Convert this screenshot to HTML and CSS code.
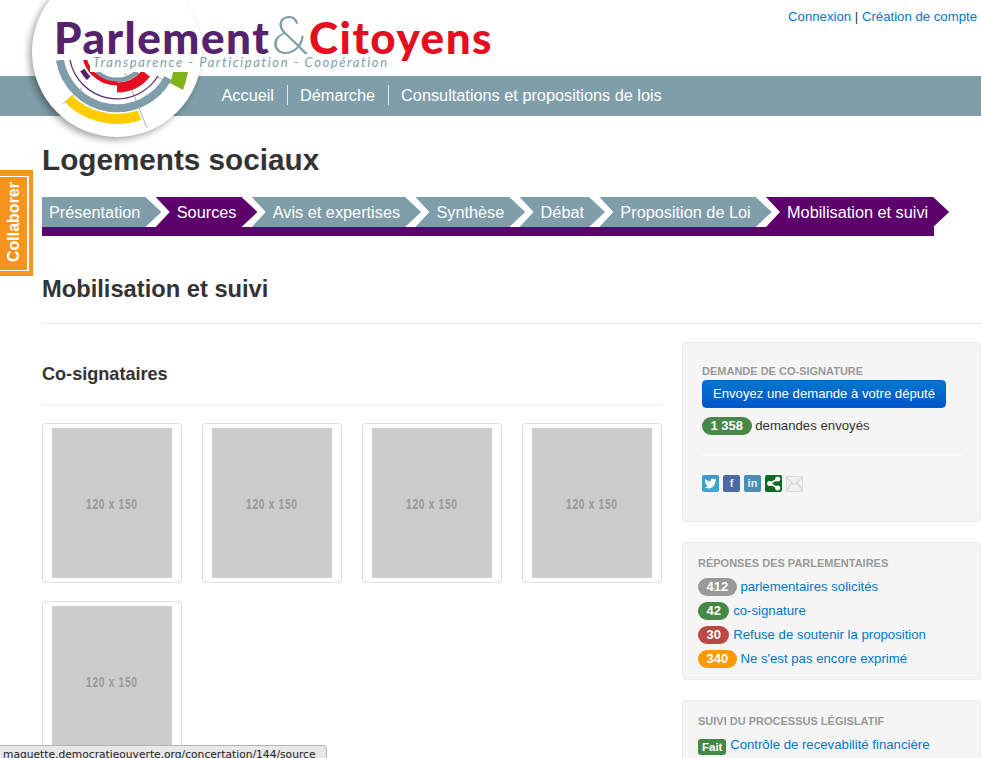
FILE: index.html
```html
<!DOCTYPE html>
<html lang="fr">
<head>
<meta charset="utf-8">
<title>Logements sociaux</title>
<link rel="stylesheet" href="styles.css">
</head>
<body>
<header class="site-header">
  <div class="top-links"><a href="#">Connexion</a> | <a href="#">Création de compte</a></div>
  <nav class="main-nav">
    <a href="#">Accueil</a>
    <a href="#">Démarche</a>
    <a href="#">Consultations et propositions de lois</a>
  </nav>
  <div class="logo-disc"></div>
  <svg class="logo-arcs" width="210" height="140" viewBox="0 0 210 140" aria-hidden="true">
    <defs>
      <clipPath id="arcclip"><path d="M0 60H90V72H210V140H0Z"/></clipPath>
    </defs>
    <g clip-path="url(#arcclip)" fill="none">
      <path d="M63 104L82 88M125 73L147 128M157 77L164 80" stroke="#809ea9" stroke-width=".8"/>
      <path d="M59.9 60A58 58 0 0 0 168 78" stroke="#809ea9" stroke-width="8"/>
      <path d="M68.2 98.8A69 69 0 0 0 139.5 115.2" stroke="#ffcc00" stroke-width="10"/>
      <path d="M173 72H188Q186 82 183 90L170 83Q172 78 173 72Z" fill="#7fb319"/>
      <path d="M70 60A48 48 0 0 0 158 76" stroke="#55236b" stroke-width="1.2"/>
      <path d="M96.6 72A30 30 0 0 0 137.4 72" stroke="#809ea9" stroke-width="5"/>
      <path d="M85 59.8A33.5 33.5 0 0 0 117 83.5" stroke="#e30f20" stroke-width="4"/>
      <path d="M117 87.5A37.5 37.5 0 0 0 146.1 73.6" stroke="#e30f20" stroke-width="10"/>
      <path d="M82.4 70A40 40 0 0 0 88.7 78.3" stroke="#55236b" stroke-width="5"/>
    </g>
  </svg>
  <div class="logo-name"><span class="logo-a">Parlement</span><span class="logo-amp">&amp;</span><span class="logo-b">Citoyens</span></div>
  <div class="logo-tag">Transparence - Participation - Coopération</div>
</header>

<a class="collab" href="#"><span>Collaborer</span></a>

<main class="page">
  <h1>Logements sociaux</h1>
  <ul class="steps">
    <li class="step first"><a href="#">Présentation</a></li>
    <li class="step on"><a href="#">Sources</a></li>
    <li class="step"><a href="#">Avis et expertises</a></li>
    <li class="step"><a href="#">Synthèse</a></li>
    <li class="step"><a href="#">Débat</a></li>
    <li class="step"><a href="#">Proposition de Loi</a></li>
    <li class="step on"><a href="#">Mobilisation et suivi</a></li>
  </ul>
  <div class="steps-bar"></div>

  <h2>Mobilisation et suivi</h2>

  <div class="cols">
    <section class="left">
      <h3>Co-signataires</h3>
      <div class="cards">
        <div class="card"><div class="ph"><span>120 x 150</span></div></div>
        <div class="card"><div class="ph"><span>120 x 150</span></div></div>
        <div class="card"><div class="ph"><span>120 x 150</span></div></div>
        <div class="card"><div class="ph"><span>120 x 150</span></div></div>
        <div class="card"><div class="ph"><span>120 x 150</span></div></div>
      </div>
    </section>

    <aside class="side">
      <div class="panel p-request">
        <h4>Demande de co-signature</h4>
        <a class="btn" href="#">Envoyez une demande à votre député</a>
        <p class="count"><span class="badge green">1 358</span> demandes envoyés</p>
        <hr class="sep">
        <div class="share">
          <svg class="ico tw" viewBox="0 0 17 17" width="17" height="17" aria-hidden="true"><g transform="translate(2.5 2.5) scale(.5)"><path fill="#fff" d="M23.953 4.57a10 10 0 01-2.825.775 4.958 4.958 0 002.163-2.723c-.951.555-2.005.959-3.127 1.184a4.92 4.92 0 00-8.384 4.482C7.69 8.095 4.067 6.13 1.64 3.162a4.822 4.822 0 00-.666 2.475c0 1.71.87 3.213 2.188 4.096a4.904 4.904 0 01-2.228-.616v.06a4.923 4.923 0 003.946 4.827 4.996 4.996 0 01-2.212.085 4.936 4.936 0 004.604 3.417 9.867 9.867 0 01-6.102 2.105c-.39 0-.779-.023-1.17-.067a13.995 13.995 0 007.557 2.209c9.053 0 13.998-7.496 13.998-13.985 0-.21 0-.42-.015-.63A9.935 9.935 0 0024 4.59z"/></g></svg>
          <span class="ico fb">f</span>
          <span class="ico li">in</span>
          <svg class="ico sh" viewBox="0 0 17 17" width="17" height="17" aria-hidden="true"><path d="M12.5 4L5 8.5L12.5 13" fill="none" stroke="#fff" stroke-width="1.8"/><circle cx="12.7" cy="4" r="2.5" fill="#fff"/><circle cx="4.6" cy="8.5" r="2.5" fill="#fff"/><circle cx="12.7" cy="13" r="2.5" fill="#fff"/></svg>
          <svg class="ico ml" viewBox="0 0 17 17" width="17" height="17" aria-hidden="true"><path d="M.5 1.5H16.5V16.5H.5Z" fill="#f0f0f0" stroke="#dcdcdc"/><path d="M.5 2L8.5 10L16.5 2M.5 16L6 7.5M16.5 16L11 7.5" fill="none" stroke="#c8c8c8"/></svg>
        </div>
      </div>

      <div class="panel p-list">
        <h4>Réponses des parlementaires</h4>
        <ul class="rows">
          <li><span class="badge grey">412</span> <a href="#">parlementaires solicités</a></li>
          <li><span class="badge green">42</span> <a href="#">co-signature</a></li>
          <li><span class="badge red">30</span> <a href="#">Refuse de soutenir la proposition</a></li>
          <li><span class="badge orange">340</span> <a href="#">Ne s'est pas encore exprimé</a></li>
        </ul>
      </div>

      <div class="panel p-last">
        <h4>Suivi du processus législatif</h4>
        <ul class="rows">
          <li><span class="label">Fait</span> <a href="#">Contrôle de recevabilité financière</a></li>
        </ul>
      </div>
    </aside>
  </div>
</main>

<div class="status">maquette.democratieouverte.org/concertation/144/source</div>
</body>
</html>
```

FILE: styles.css
```css
* { box-sizing: border-box; }
html, body { margin: 0; padding: 0; height: 758px; overflow: hidden; background: #fff; }
body { font-family: "Liberation Sans", Arial, sans-serif; font-size: 13.2px; color: #333; position: relative; }
a { color: #0077cc; text-decoration: none; }
ul { list-style: none; margin: 0; padding: 0; }

/* header */
.site-header { position: relative; height: 116px; }
.top-links { height: 76px; padding: 9px 4px 0 0; text-align: right; line-height: 16px; color: #333; }
.main-nav { height: 40px; background: #809ea9; padding: 0 0 2px 209px; display: flex; align-items: center; }
.main-nav a { color: #fff; font-size: 16.3px; line-height: 20px; padding: 0 12.5px; }
.main-nav a + a { border-left: 1px solid #dfe7ea; }
.logo-disc { position: absolute; left: 32px; top: -33px; width: 170px; height: 170px; border-radius: 50%; background: #fff; box-shadow: -3px 3px 7px rgba(0,0,0,.35); }
.logo-arcs { position: absolute; left: 0; top: 0; }
.logo-name { position: absolute; left: 54px; top: 17px; display: flex; align-items: baseline; font-family: Lato, sans-serif; white-space: nowrap; line-height: 34px; }
.logo-a { font-size: 44px; font-weight: 900; color: #55236b; letter-spacing: 1.5px; }
.logo-amp { font-size: 54px; font-weight: 300; color: #809ea9; margin-left: 1px; }
.logo-b { font-size: 44px; font-weight: 900; color: #e30f20; letter-spacing: 1.5px; }
.logo-tag { position: absolute; left: 93px; top: 55px; font-family: Lato, sans-serif; font-style: italic; font-size: 13px; line-height: 15px; letter-spacing: 1.6px; color: #809ea9; white-space: nowrap; }

/* side tab */
.collab { position: absolute; left: 0; top: 170px; width: 33px; height: 106px; background: #f7941e; display: flex; align-items: center; }
.collab::after { content: ""; position: absolute; left: 0; top: 6px; bottom: 5px; right: 4px; border: solid #fff; border-width: 1px 2px 1px 0; }
.collab span { display: block; width: 27px; padding-top: 2px; writing-mode: vertical-rl; transform: rotate(180deg); color: #fff; font-weight: 700; font-size: 16px; line-height: 27px; text-align: center; }

/* main */
.page { margin-left: 42px; }
h1 { margin: 27px 0 20px; font-size: 29.7px; line-height: 34px; font-weight: 700; color: #333; }
.steps { display: flex; height: 30px; white-space: nowrap; }
.step { height: 30px; background: #809ea9; margin-left: -5.7px; padding: 0 21px; line-height: 31px; font-size: 16.3px; clip-path: polygon(0 0, calc(100% - 16px) 0, 100% 50%, calc(100% - 16px) 100%, 0 100%, 14px 50%); }
.step a { color: #fff; }
.step.first { margin-left: 0; padding-left: 7px; clip-path: polygon(0 0, calc(100% - 16px) 0, 100% 50%, calc(100% - 16px) 100%, 0 100%); }
.step.on { background: #5c006c; }
.steps-bar { width: 892px; height: 9px; background: #5c006c; }
h2 { margin: 38px 0 0; padding-bottom: 19px; font-size: 23.7px; line-height: 30px; font-weight: 700; color: #333; border-bottom: 1px solid #e8e8e8; }

.cols { display: grid; grid-template-columns: 620px 299px; column-gap: 20px; }
.left { padding-top: 38px; }
h3 { margin: 0 0 18px; padding-bottom: 18px; font-size: 18.1px; line-height: 24px; font-weight: 700; border-bottom: 1px solid #eee; color: #333; }
.cards { display: grid; grid-template-columns: repeat(4, 140px); gap: 18px 20px; }
.card { border: 1px solid #ddd; border-radius: 4px; padding: 4px 9px; height: 160px; }
.ph { width: 120px; height: 150px; background: #ccc; color: #999; display: flex; align-items: center; justify-content: center; font-weight: 700; font-size: 15px; letter-spacing: 1px; }
.ph span { display: block; white-space: nowrap; transform: scaleX(.68); }

/* sidebar */
.side { padding-top: 18px; }
.panel { background: #f5f5f5; border: 1px solid #eaeaea; border-radius: 4px; margin-bottom: 20px; }
.p-request { height: 180px; padding: 22px 19px 0; }
.p-list { height: 138px; padding: 14px 15px 0; }
.p-last { height: 120px; padding: 14px 15px 0; }
h4 { margin: 0; font-size: 11px; line-height: 13px; font-weight: 700; text-transform: uppercase; color: #999; }
.btn { display: block; width: 244px; height: 28px; margin-top: 2px; border-radius: 4px; background: linear-gradient(#0077cc, #0055cc); border: 1px solid #0060c4; color: #fff; font-size: 13.15px; line-height: 26px; text-align: center; }
.count { margin: 9px 0 0; line-height: 18px; }
.badge { display: inline-block; height: 18px; padding: 0 8.5px; border-radius: 9px; color: #fff; font-weight: 700; font-size: 13px; line-height: 18px; }
.green { background: #468847; }
.grey { background: #999; }
.red { background: #b94a48; }
.orange { background: #ff9900; }
.sep { border: 0; border-top: 2px solid #fafafa; margin: 19px 0 19px; width: 260px; }
.share { display: flex; gap: 4px; }
.ico { display: block; width: 17px; height: 17px; border-radius: 2px; flex: none; }
.tw { background: linear-gradient(#3d9bc4, #39a9d4); }
span.ico { color: #e0ecf4; text-align: center; font-size: 11px; line-height: 17px; font-weight: 700; }
.fb { background: #4c69a3; }
.li { background: #4a8db5; }
.sh { background: #0b6b22; }
.ml { background: #f5f5f5; }
.rows { margin-top: 8px; }
.rows li { height: 24px; line-height: 18px; white-space: nowrap; }
.p-last .rows { margin-top: 8px; }
.label { display: inline-block; height: 16px; padding: 0 4px; border-radius: 3px; background: #468847; color: #fff; font-weight: 700; font-size: 11.5px; line-height: 16px; vertical-align: -2px; }

/* browser status bubble */
.status { position: absolute; left: -1px; bottom: -2px; width: 328px; height: 15px; padding-left: 3px; background: #e8e8e8; border: 1px solid #b4b4b4; border-radius: 0 4px 0 0; font-family: "DejaVu Sans", sans-serif; font-size: 10.7px; line-height: 17px; color: #222; white-space: nowrap; overflow: hidden; }
```
